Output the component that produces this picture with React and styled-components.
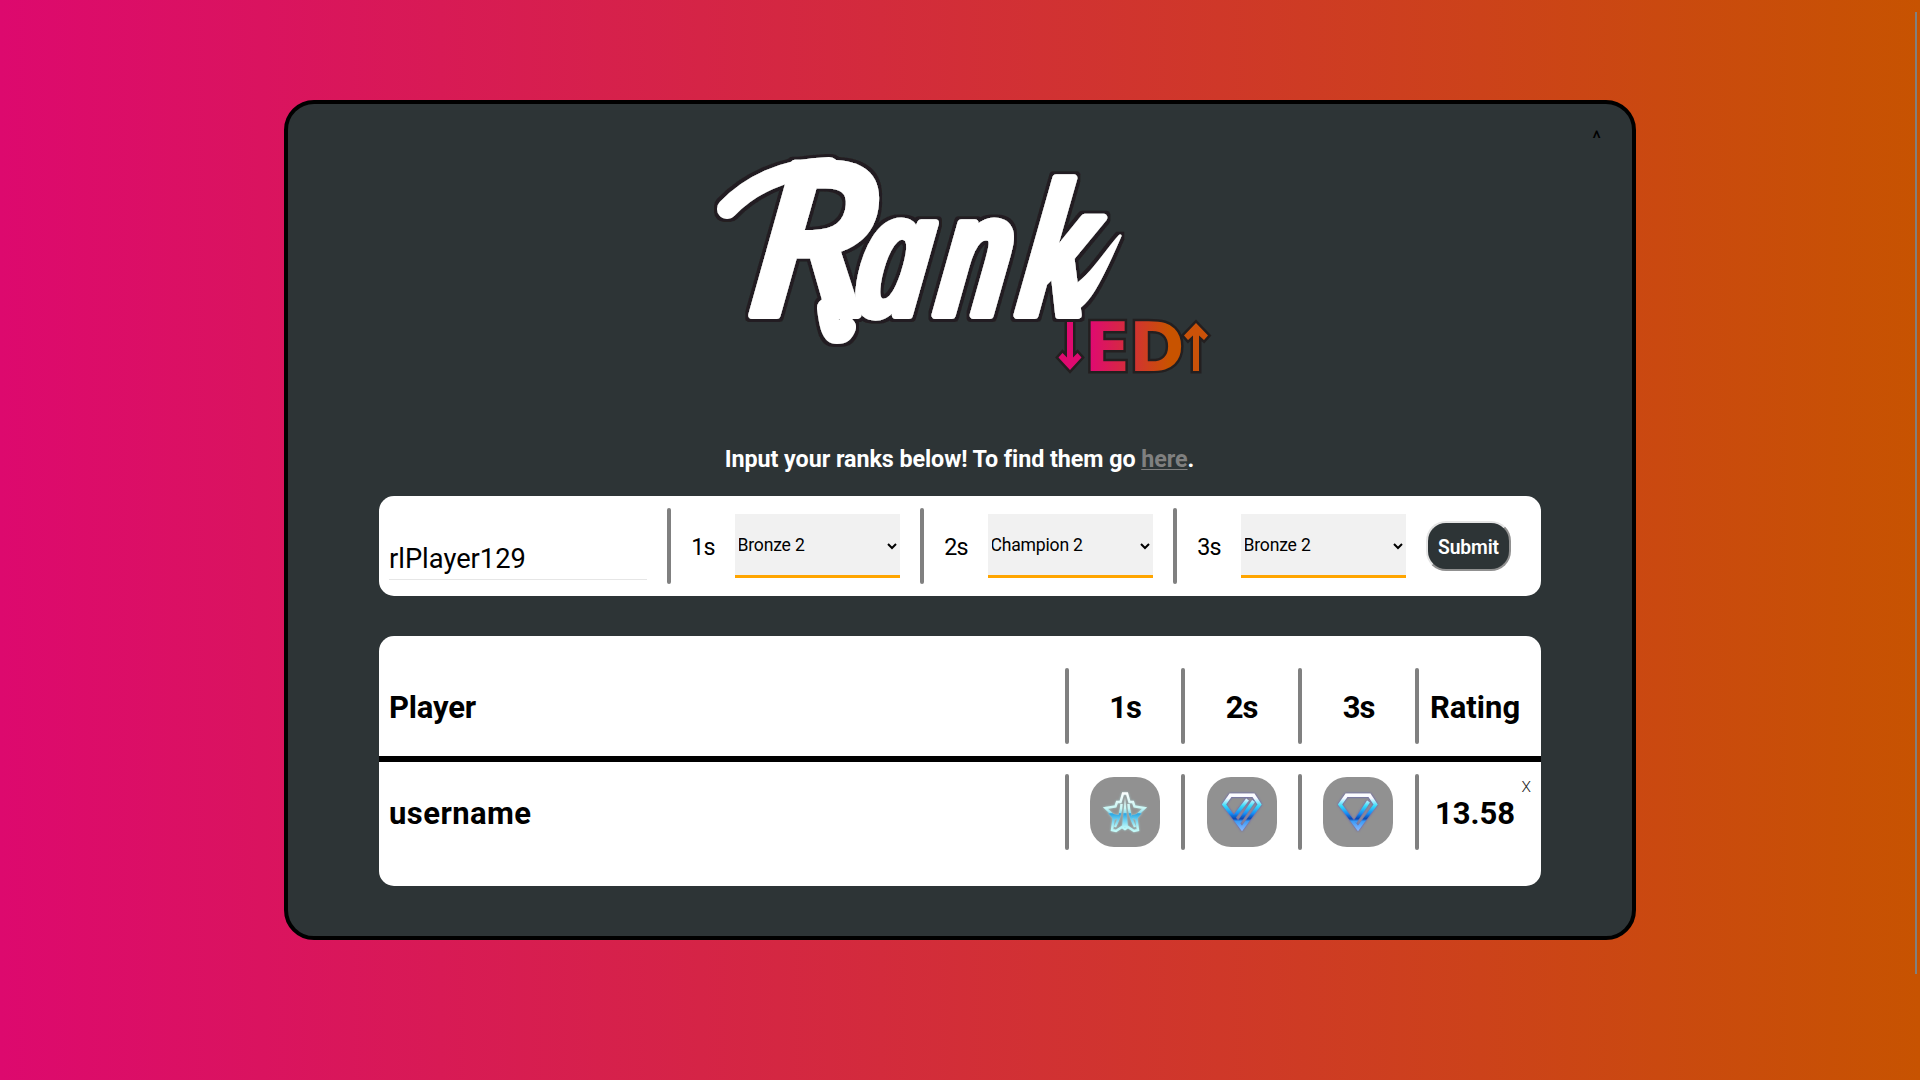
import React from "react";
import styled, { createGlobalStyle } from "styled-components";

const GlobalStyle = createGlobalStyle`
  * { box-sizing: border-box; }
  body {
    margin: 0;
    overflow: hidden;
    font-family: Roboto, "Liberation Sans", sans-serif;
    color: #000;
  }
`;

const Page = styled.div`
  height: 1080px;
  padding-top: 100px;
  display: flex;
  justify-content: center;
  align-items: flex-start;
  background: linear-gradient(90deg, #dd096e 0%, #c75301 100%);
`;

const ScrollThumb = styled.div`
  position: fixed;
  top: 12px;
  right: 3px;
  width: 2px;
  height: 962px;
  background: #808080;
`;

const Card = styled.main`
  position: relative;
  width: 1352px;
  height: 840px;
  padding: 0 92px 0 91px;
  display: flex;
  flex-direction: column;
  background: #2d3436;
  border: 4px solid #000;
  border-radius: 30px;
`;

const Collapse = styled.button`
  position: absolute;
  top: 20px;
  right: 31px;
  padding: 0;
  border: 0;
  background: none;
  color: #000;
  font: 400 21px/28px Roboto, sans-serif;
`;

const Logo = styled.svg`
  display: block;
  align-self: center;
  width: 520px;
  height: 240px;
  margin: 36px 0 0 -1px;
  overflow: visible;
`;

const Wordmark = styled.text`
  font-family: "Open Sans", sans-serif;
  font-style: italic;
  font-weight: 600;
  fill: #fff;
  stroke: #fff;
  stroke-width: 8px;
  stroke-linejoin: round;
`;

const Narrow = styled.tspan`
  font-stretch: ${(p) => p.$width}%;
`;

const Suffix = styled.text`
  font-family: "DejaVu Sans", sans-serif;
  font-weight: 700;
  font-size: 67px;
  stroke: #231f20;
  stroke-width: 5px;
  paint-order: stroke;
`;

const Intro = styled.h2`
  margin: 61px 0 0;
  height: 36px;
  text-align: center;
  color: #fff;
  font-size: 23.3px;
  line-height: 36px;
  font-weight: 700;
  letter-spacing: -0.06px;
`;

const HelpLink = styled.a`
  color: #808080;
  text-decoration: underline;
  text-decoration-thickness: 1px;
  text-underline-offset: 2px;
`;

const Panel = styled.section`
  width: 1162px;
  background: #fff;
  border-radius: 15px;
`;

const FormPanel = styled(Panel)`
  height: 100px;
  margin-top: 19px;
  padding: 0 30px 0 10px;
  display: flex;
  align-items: center;
`;

const NameInput = styled.input`
  width: 258px;
  height: 44px;
  margin: 24px 20px 0 0;
  padding: 2px 0 0;
  border: 0;
  border-bottom: 1px solid #e6e6e6;
  outline: 0;
  font: 400 27.3px Roboto, sans-serif;
  color: #000;
`;

const Divider = styled.span`
  flex: none;
  width: 4px;
  height: 76px;
  border-radius: 2px;
  background: #808080;
`;

const Field = styled.label`
  display: flex;
  align-items: center;
  margin-right: 20px;
`;

const FieldName = styled.span`
  width: 64px;
  padding-top: 2px;
  text-align: center;
  font-size: 23.3px;
  letter-spacing: -0.8px;
`;

const RankSelect = styled.select`
  width: 165px;
  height: 64px;
  padding: 0;
  border: 0;
  border-bottom: 3px solid #ffa500;
  border-radius: 0;
  background: #f1f1f1;
  color: #000;
  font: 400 17.6px Roboto, sans-serif;
  letter-spacing: -0.2px;
  text-indent: -1.5px;
`;

const Submit = styled.button`
  width: 85px;
  height: 50px;
  padding: 2px 0 0;
  border: 2px outset #e4e4e4;
  border-radius: 20px;
  background: #2d3436;
  color: #fff;
  font: 600 19.3px Roboto, sans-serif;
  letter-spacing: -0.1px;
`;

const TablePanel = styled(Panel)`
  height: 250px;
  margin-top: 40px;
  padding-top: 20px;
`;

const Row = styled.div`
  position: relative;
  height: ${(p) => (p.$header ? 106 : 100)}px;
  padding: 0 10px;
  display: grid;
  grid-template-columns: 676px 4px 112px 4px 113px 4px 113px 4px 112px;
  align-items: center;
  border-bottom: ${(p) => (p.$header ? "6px solid #000" : "0")};
  font-size: 31px;
  font-weight: 700;
`;

const Cell = styled.div`
  display: flex;
  justify-content: ${(p) => (p.$left ? "flex-start" : "center")};
  padding: 2px 0 0;
  letter-spacing: ${(p) => p.$track || 0}px;
`;

const IconCell = styled.div`
  display: flex;
  padding-left: ${(p) => p.$inset}px;
`;

const Badge = styled.svg`
  display: block;
  width: 70px;
  height: 70px;
  border-radius: 24px;
  background: #919191;
`;

const Remove = styled.button`
  position: absolute;
  top: 13px;
  right: 10px;
  padding: 0;
  border: 0;
  background: none;
  color: #222;
  font: 300 15.5px/24px Roboto, sans-serif;
`;

function RankedLogo() {
  return (
    <Logo viewBox="0 0 520 240">
      <defs>
        <linearGradient id="suffix" gradientUnits="userSpaceOnUse" x1="392" y1="0" x2="470" y2="0">
          <stop offset="0" stopColor="#df0a70" />
          <stop offset="1" stopColor="#c85300" />
        </linearGradient>
        <filter id="outline" x="-10%" y="-10%" width="120%" height="120%">
          <feMorphology in="SourceAlpha" operator="dilate" radius="2.6" result="fat" />
          <feFlood floodColor="#231f20" />
          <feComposite in2="fat" operator="in" result="edge" />
          <feMerge>
            <feMergeNode in="edge" />
            <feMergeNode in="SourceGraphic" />
          </feMerge>
        </filter>
      </defs>
      <g filter="url(#outline)">
        <path
          d="M28 69C50 46 84 28 130 27M128 168C130 184 132 194 138 194C144 194 146 190 147 187"
          fill="none"
          stroke="#fff"
          strokeWidth="20"
          strokeLinecap="round"
        />
        <path
          d="M366 172C384 172 396 154 421 96C408 110 394 134 376 146Z"
          fill="#fff"
          stroke="#fff"
          strokeWidth="3"
          strokeLinejoin="round"
        />
        <Wordmark transform="translate(0 175) skewX(-4)" x="46 155 237 319" y="0">
          <Narrow $width={93} fontSize="212">R</Narrow>
          <Narrow $width={86} fontSize="170">an</Narrow>
          <Narrow $width={86} fontSize="180">k</Narrow>
        </Wordmark>
      </g>
      <g stroke="#231f20" strokeWidth="5" strokeLinejoin="miter" paintOrder="stroke">
        <path fill="#df0a70" d="M368 182h6v35.500l4.500-4.500 4 4.500-11.500 12.500-11.500-12.500 4-4.500 4.500 4.500z" />
        <path fill="#cb5209" d="M494 231h6v-35.500l5 4.500 4-4.500-12-12.500-12 12.500 4 4.500 5-4.500z" />
      </g>
      <Suffix x="385.500 430" y="231" fill="url(#suffix)">ED</Suffix>
    </Logo>
  );
}

function DiamondBadge({ id, bars }) {
  return (
    <Badge viewBox="0 0 70 70">
      <defs>
        <linearGradient id={id} gradientUnits="userSpaceOnUse" x1="0" y1="16" x2="0" y2="54">
          <stop offset="0" stopColor="#fff" />
          <stop offset="0.14" stopColor="#f6f8ff" />
          <stop offset="0.34" stopColor="#35dcfa" />
          <stop offset="0.54" stopColor="#168cf4" />
          <stop offset="0.68" stopColor="#0747b0" />
          <stop offset="0.74" stopColor="#3a9bf5" />
          <stop offset="1" stopColor="#8cb8ff" />
        </linearGradient>
        <filter id={id + "-glow"} x="-20%" y="-20%" width="140%" height="140%">
          <feDropShadow dx="0" dy="0" stdDeviation="1.3" floodColor="#4b45c8" floodOpacity="0.9" />
        </filter>
      </defs>
      <g filter={`url(#${id}-glow)`} fill="none" stroke={`url(#${id})`} strokeWidth="3.4">
        <path d="M23.500 18.300H46.500L52.600 27.500L35 51.500L17 27.500Z" />
        {bars === 2 && <path d="M40.500 22.500L26.800 40.500" />}
        <path d={bars === 2 ? "M46.500 24L31.500 46" : "M45.500 24.500L32 45"} />
      </g>
    </Badge>
  );
}

function StarBadge() {
  return (
    <Badge viewBox="0 0 70 70">
      <defs>
        <linearGradient id="star" gradientUnits="userSpaceOnUse" x1="0" y1="15" x2="0" y2="56">
          <stop offset="0" stopColor="#fff" />
          <stop offset="0.4" stopColor="#c8f6f4" />
          <stop offset="0.5" stopColor="#8edff0" />
          <stop offset="0.53" stopColor="#2ba5e2" />
          <stop offset="0.66" stopColor="#62cbf0" />
          <stop offset="0.85" stopColor="#b4f4f8" />
          <stop offset="1" stopColor="#c9fbf8" />
        </linearGradient>
        <filter id="star-glow" x="-20%" y="-20%" width="140%" height="140%">
          <feDropShadow dx="0" dy="0" stdDeviation="1" floodColor="#aeeeee" floodOpacity="0.6" />
        </filter>
      </defs>
      <g filter="url(#star-glow)" stroke="url(#star)" strokeLinejoin="miter">
        <path
          fill="none"
          strokeWidth="2.400"
          d="M33 16.500H37L39.500 25H43L44.500 29.500L54.500 31L46 39L48 53L44 54L38 50L35 52L32 50L26 54L22 53L24 39L15.500 31L25.500 29.500L27 25H30.500Z"
        />
        <path fill="none" strokeWidth="2.400" d="M31.500 27Q31 38 25 50M38.500 27Q39 38 45 50" />
        <path fill="url(#star)" stroke="none" d="M35 20L38 50H32ZM18 36L29 38V41L24 43Z" />
        <path fill="url(#star)" stroke="none" d="M52 36L42 38V41L46 43Z" />
      </g>
    </Badge>
  );
}

const ranks = ["Bronze 1", "Bronze 2", "Bronze 3", "Diamond 2", "Champion 2"];

function RankField({ name, value }) {
  return (
    <>
      <Divider />
      <Field>
        <FieldName>{name}</FieldName>
        <RankSelect defaultValue={value}>
          {ranks.map((r) => (
            <option key={r}>{r}</option>
          ))}
        </RankSelect>
      </Field>
    </>
  );
}

export default function App() {
  return (
    <Page>
      <GlobalStyle />
      <Card>
        <Collapse>^</Collapse>
        <RankedLogo />
        <Intro>
          Input your ranks below! To find them go <HelpLink>here</HelpLink>.
        </Intro>
        <FormPanel>
          <NameInput defaultValue="rlPlayer129" spellCheck={false} />
          <RankField name="1s" value="Bronze 2" />
          <RankField name="2s" value="Champion 2" />
          <RankField name="3s" value="Bronze 2" />
          <Submit>Submit</Submit>
        </FormPanel>
        <TablePanel>
          <Row $header>
            <Cell $left $track={-0.2}>Player</Cell>
            <Divider />
            <Cell $track={-1}>1s</Cell>
            <Divider />
            <Cell $track={-1}>2s</Cell>
            <Divider />
            <Cell $track={-1}>3s</Cell>
            <Divider />
            <Cell>Rating</Cell>
          </Row>
          <Row>
            <Cell $left $track={0.45}>username</Cell>
            <Divider />
            <IconCell $inset={21}>
              <StarBadge />
            </IconCell>
            <Divider />
            <IconCell $inset={22}>
              <DiamondBadge id="diamond-three" bars={2} />
            </IconCell>
            <Divider />
            <IconCell $inset={21}>
              <DiamondBadge id="diamond-two" bars={1} />
            </IconCell>
            <Divider />
            <Cell>13.58</Cell>
            <Remove>X</Remove>
          </Row>
        </TablePanel>
      </Card>
      <ScrollThumb />
    </Page>
  );
}
